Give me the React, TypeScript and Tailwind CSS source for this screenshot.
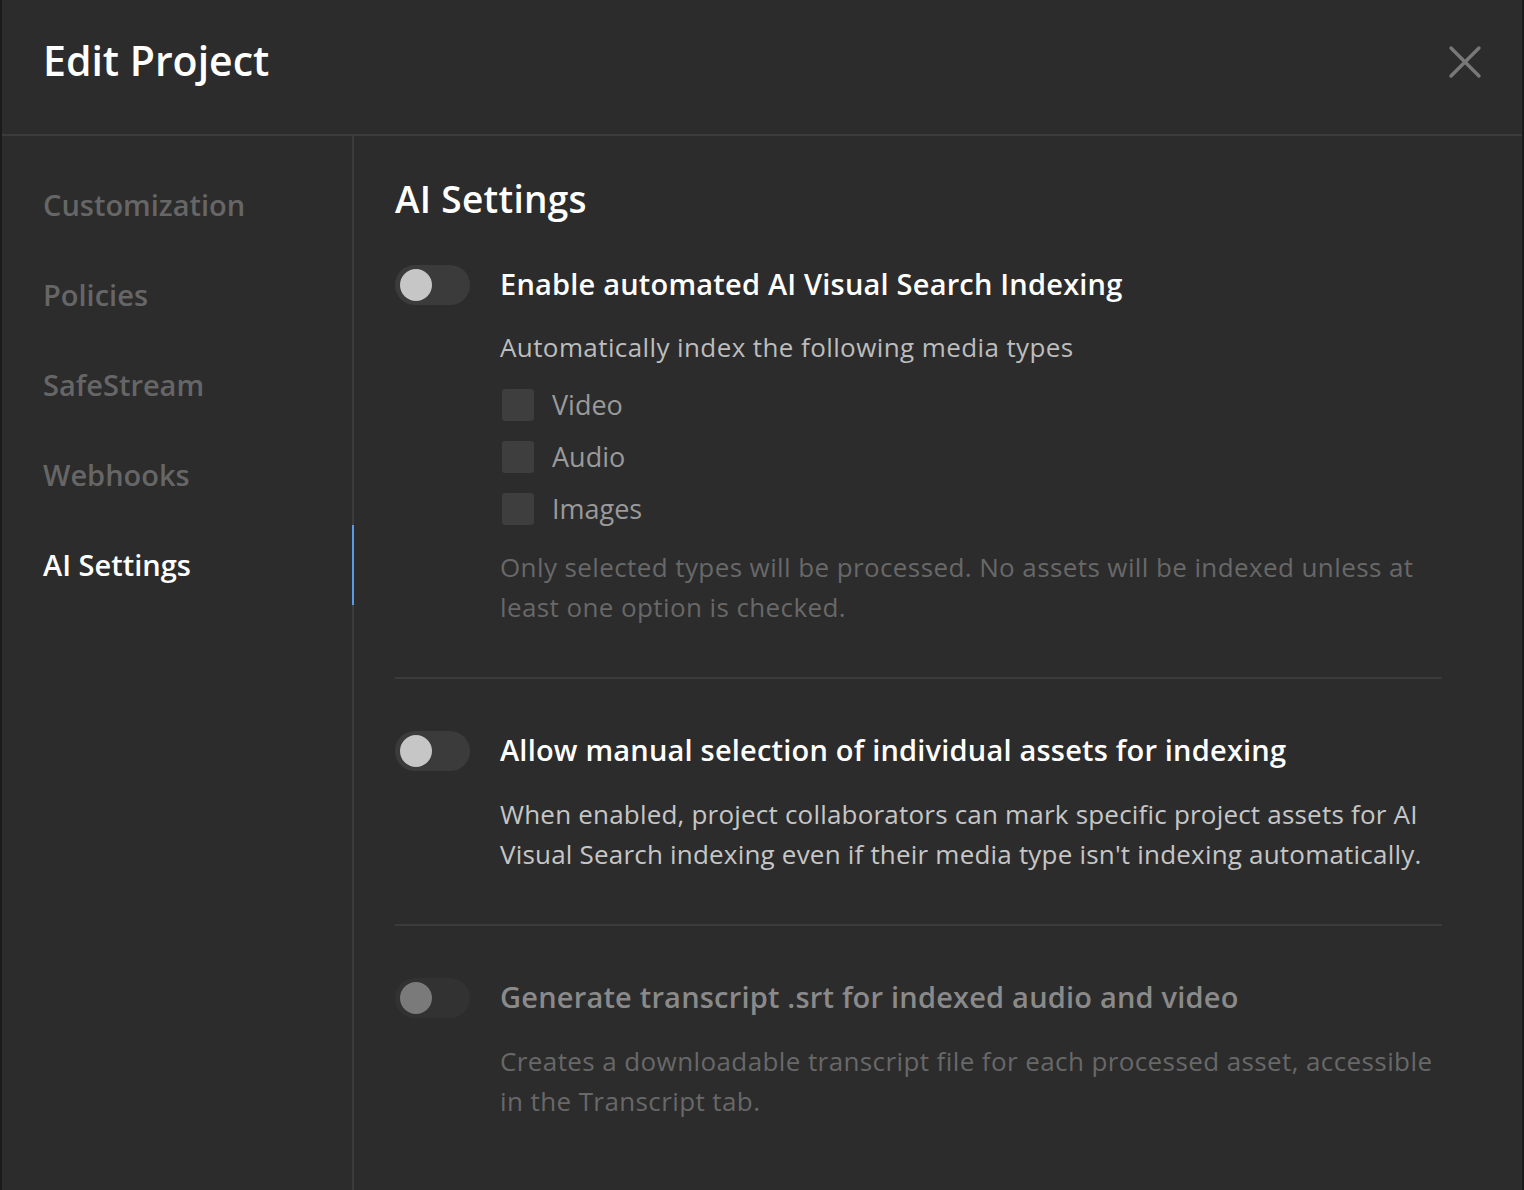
import React from "react";

const font = { fontFamily: "'Open Sans', Lato, sans-serif" };

function Toggle({ disabled }: { disabled?: boolean }) {
  return (
    <div
      className={`flex h-[40px] w-[75px] shrink-0 items-center rounded-full px-[5px] ${
        disabled ? "bg-[#323232]" : "bg-[#3b3b3b]"
      }`}
    >
      <div
        className={`h-[32px] w-[32px] rounded-full ${disabled ? "bg-[#7a7a7a]" : "bg-[#c6c6c6]"}`}
      />
    </div>
  );
}

function Check({ label }: { label: string }) {
  return (
    <div className="flex h-[52px] items-center gap-[18px]">
      <div className="ml-[2px] h-[32px] w-[32px] rounded-[3px] bg-[#3e3e3e]" />
      <span className="text-[27px] font-medium text-[#9a9a9a]">{label}</span>
    </div>
  );
}

export default function App() {
  const nav = ["Customization", "Policies", "SafeStream", "Webhooks", "AI Settings"];
  return (
    <div className="flex h-[1190px] w-[1524px] bg-[#1b1b1b]" style={font}>
      <div className="ml-[2px] flex h-full w-[1520px] flex-col bg-[#2c2c2c]">
        <div className="flex h-[136px] shrink-0 items-center justify-between border-b-2 border-[#3b3b3b] pl-[41px] pr-[40px]">
          <h1 className="mt-[-12px] text-[41px] font-semibold text-white">Edit Project</h1>
          <svg width="34" height="34" viewBox="0 0 34 34" className="mt-[-10px]">
            <path d="M3 3 L31 31 M31 3 L3 31" stroke="#787878" strokeWidth="3.4" strokeLinecap="round" />
          </svg>
        </div>
        <div className="flex min-h-0 flex-1">
          <div className="flex w-[352px] shrink-0 flex-col gap-[10px] border-r-2 border-[#3b3b3b] pt-[29px]">
            {nav.map((n) => {
              const active = n === "AI Settings";
              return (
                <div
                  key={n}
                  className={`relative flex h-[80px] items-center pl-[41px] text-[29px] font-semibold ${
                    active ? "text-white" : "text-[#666666]"
                  }`}
                >
                  {n}
                  {active && <div className="absolute right-[-2px] top-0 h-[80px] w-[2px] bg-[#5a9ae6]" />}
                </div>
              );
            })}
          </div>
          <div className="flex flex-1 flex-col pl-[41px] pr-[80px] pt-[40px]">
            <h2 className="text-[37px] font-semibold leading-[46px] tracking-[0.3px] text-white">AI Settings</h2>
            <div className="mt-[42px] flex flex-col">
              <div className="flex items-start gap-[30px]">
                <div className="pt-[1px]">
                  <Toggle />
                </div>
                <div className="flex flex-col">
                  <div className="text-[29px] font-semibold leading-[40px] tracking-[0.2px] text-white">
                    Enable automated AI Visual Search Indexing
                  </div>
                  <div className="mt-[23px] text-[26px] font-medium leading-[40px] tracking-[0.4px] text-[#bdbdbd]">
                    Automatically index the following media types
                  </div>
                  <div className="mt-[12px] flex flex-col">
                    <Check label="Video" />
                    <Check label="Audio" />
                    <Check label="Images" />
                  </div>
                  <div className="mt-[12px] text-[26px] font-medium leading-[40px] tracking-[0.4px] text-[#686868]">
                    Only selected types will be processed. No assets will be indexed unless at least one option is checked.
                  </div>
                </div>
              </div>
              <div className="mt-[50px] h-[2px] bg-[#3b3b3b]" />
              <div className="mt-[51px] flex items-start gap-[30px]">
                <div className="pt-[1px]">
                  <Toggle />
                </div>
                <div className="flex flex-col">
                  <div className="text-[29px] font-semibold leading-[40px] tracking-[0.2px] text-white">
                    Allow manual selection of individual assets for indexing
                  </div>
                  <div className="mt-[24px] text-[26px] font-medium leading-[40px] tracking-[0.2px] text-[#c6c6c6]">
                    When enabled, project collaborators can mark specific project assets for AI Visual Search indexing even if their media type isn't indexing automatically.
                  </div>
                </div>
              </div>
              <div className="mt-[50px] h-[2px] bg-[#3b3b3b]" />
              <div className="mt-[51px] flex items-start gap-[30px]">
                <div className="pt-[1px]">
                  <Toggle disabled />
                </div>
                <div className="flex flex-col">
                  <div className="text-[29px] font-semibold leading-[40px] tracking-[0.2px] text-[#8a8a8a]">
                    Generate transcript .srt for indexed audio and video
                  </div>
                  <div className="mt-[24px] text-[26px] font-medium leading-[40px] tracking-[0.4px] text-[#686868]">
                    Creates a downloadable transcript file for each processed asset, accessible in the Transcript tab.
                  </div>
                </div>
              </div>
            </div>
          </div>
        </div>
      </div>
    </div>
  );
}
